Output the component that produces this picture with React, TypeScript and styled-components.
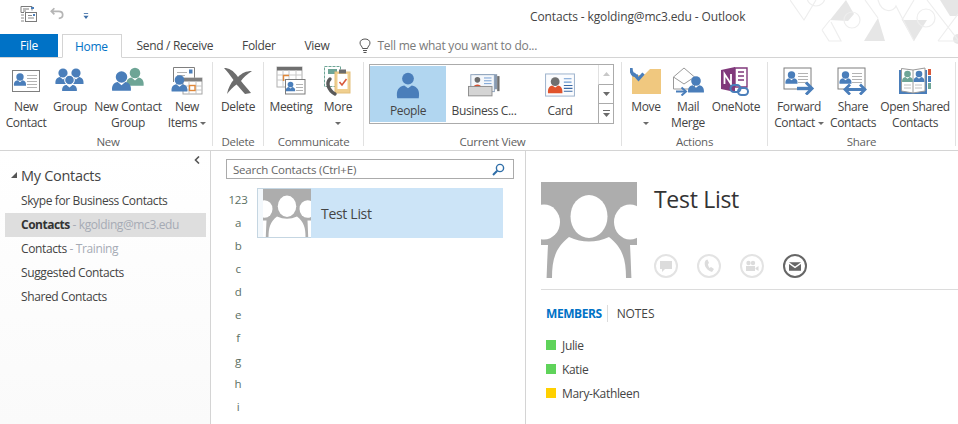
import React from "react";
import styled, { createGlobalStyle } from "styled-components";

const BLUE = "#4a7eba";
const GREEN = "#6ea596";
const GREY = "#7f7f7f";

const GlobalStyle = createGlobalStyle`
  html, body {
    margin: 0;
    padding: 0;
    background: #fff;
    overflow: hidden;
  }
  body {
    font-family: "Open Sans", "Noto Sans", sans-serif;
    color: #444;
  }
  * {
    box-sizing: border-box;
  }
`;

function Person({ x, y, s = 1, color = BLUE }: { x: number; y: number; s?: number; color?: string }) {
  return (
    <g transform={`translate(${x} ${y}) scale(${s})`} fill={color}>
      <circle cx="0" cy="0" r="4.6" />
      <path d="M-7.5 11 C-8 6.5 -6 4.5 -3 4 L0 6.5 L3 4 C6 4.5 8 6.5 7.5 11 Z" />
    </g>
  );
}

function CardLines({ x, y, w, n = 4 }: { x: number; y: number; w: number; n?: number }) {
  return (
    <g stroke="#b3b3b3" strokeWidth="1">
      {Array.from({ length: n }, (_, i) => (
        <line key={i} x1={x} x2={x + w} y1={y + i * 3 + 0.5} y2={y + i * 3 + 0.5} />
      ))}
    </g>
  );
}

const NewContactIcon = () => (
  <svg width="30" height="24" viewBox="0 0 30 24">
    <rect x="1.5" y="1.5" width="27" height="21" fill="#fff" stroke={GREY} />
    <Person x={9} y={8} s={0.8} />
    <CardLines x={16} y={6} w={10} n={5} />
  </svg>
);

const GroupIcon = () => (
  <svg width="30" height="28" viewBox="0 0 30 28">
    <Person x={8} y={6} />
    <Person x={21} y={6} />
    <g stroke="#fff" strokeWidth="1">
      <Person x={14.5} y={13} s={1.05} />
    </g>
  </svg>
);

const NewContactGroupIcon = () => (
  <svg width="34" height="28" viewBox="0 0 34 28">
    <Person x={24} y={6} s={1.15} color={GREEN} />
    <Person x={10.5} y={10} s={1.25} />
  </svg>
);

const NewItemsIcon = () => (
  <svg width="32" height="30" viewBox="0 0 32 30">
    <path d="M2.5 16 V1.5 H23.5 V12" fill="#fff" stroke={GREY} />
    <rect x="18" y="3.5" width="3.5" height="4" fill={BLUE} />
    <g stroke="#b3b3b3">
      <line x1="6" x2="16" y1="6.5" y2="6.5" />
      <line x1="6" x2="14" y1="9.5" y2="9.5" />
    </g>
    <rect x="12" y="12" width="19" height="16" fill="#fff" stroke="#a6a6a6" />
    <rect x="12" y="12" width="19" height="3.5" fill="#808080" />
    <path d="M12 20h19M12 24h19M18 15v13M25 15v13" stroke="#c4c4c4" fill="none" />
    <rect x="18.5" y="19.5" width="5.5" height="5" fill="#fff" stroke="#e0883a" strokeWidth="1.4" />
    <Person x={8.5} y={14} s={1.05} />
  </svg>
);

const DeleteIcon = () => (
  <svg width="30" height="28" viewBox="0 0 30 28">
    <path
      d="M1 1 C6 1 10 3 15 10 C19 6 23 4 29 4 C24 7 20 11 18 14 C21 18 25 22 28 26 L22 27 C19 24 16 20 13.5 17.5 C10 20 7 23 4 27 C5 21 8 16 10.5 13 C7 8 4 4 1 1 Z"
      fill="#6d6d6d"
    />
  </svg>
);

const MeetingIcon = () => (
  <svg width="30" height="30" viewBox="0 0 30 30">
    <rect x="1" y="1" width="25" height="20" fill="#fff" stroke="#b0b0b0" />
    <rect x="1" y="1" width="25" height="3.5" fill="#6f6f6f" />
    <path d="M1 9h25M1 14h25M7 4v17M13 4v17M20 4v17" stroke="#c9c9c9" fill="none" />
    <path d="M7.5 15 V9.5 H13" fill="none" stroke="#e0883a" strokeWidth="1.4" />
    <rect x="9.5" y="13.5" width="19.5" height="14.5" fill="#fff" stroke="#7c7c7c" />
    <Person x={14.5} y={18.5} s={0.62} />
    <CardLines x={20} y={18} w={7} n={3} />
  </svg>
);

const MoreIcon = () => (
  <svg width="30" height="32" viewBox="0 0 30 32">
    <rect x="1.5" y="1.5" width="16" height="20" fill="none" stroke={GREEN} strokeDasharray="3 1" />
    <rect x="5" y="4" width="9" height="5" fill={GREEN} />
    <rect x="12" y="7" width="15" height="21" fill="#f0cf8f" stroke="#e3bf7d" />
    <rect x="14.5" y="9" width="10" height="15" fill="#fff" />
    <path d="M16 4.5h7v4h-7z" fill="#6b6b6b" />
    <path d="M16.5 17 l2.5 3 l4.5 -6" fill="none" stroke="#d8583a" strokeWidth="1.6" />
    <path d="M7 14 C3 18 5 25 12 29" fill="none" stroke="#595959" strokeWidth="3.4" strokeLinecap="round" />
  </svg>
);

const BigPersonIcon = () => (
  <svg width="26" height="28" viewBox="0 0 26 30">
    <circle cx="13" cy="7" r="6.3" fill={BLUE} />
    <path d="M1.5 28 C0 20 3 15.5 9 14.5 L13 17.5 L17 14.5 C23 15.5 26 20 24.5 28 Z" fill={BLUE} />
  </svg>
);

const BusinessCardsIcon = () => (
  <svg width="32" height="25" viewBox="0 0 34 26">
    <rect x="7" y="1" width="24" height="16" fill="#8a9bb0" />
    <rect x="31" y="3" width="2.5" height="16" fill="#6f6f6f" />
    <rect x="3" y="1.5" width="25" height="18" fill="#f4f7fb" stroke="#8aa0bb" />
    <circle cx="10" cy="7" r="3" fill="#6c6c6c" />
    <path d="M6 15 C6 11 14 11 14 15 Z" fill="#d8502f" />
    <path d="M17 5h8M17 8h8M17 11h8" stroke="#6f9bd1" />
    <rect x="0.5" y="14" width="25" height="10" fill="#d4d4d4" stroke="#8c8c8c" />
  </svg>
);

const CardIcon = () => (
  <svg width="32" height="25" viewBox="0 0 32 26">
    <rect x="1" y="1" width="30" height="23" fill="#fbfcfe" stroke="#9ab0cb" />
    <circle cx="11" cy="9" r="4.6" fill="#6f6f6f" />
    <path d="M3.5 21 C3 15 6 13.5 8 13 L11 15 L14 13 C16 13.5 19 15 18.5 21 Z" fill="#e0532c" />
    <path d="M20 6h8M20 9.5h8" stroke="#6f9bd1" strokeWidth="1.2" />
    <path d="M20 13h9M20 16h9M20 19h9" stroke="#3c6aa5" strokeWidth="1.2" />
  </svg>
);

const MoveIcon = () => (
  <svg width="32" height="30" viewBox="0 0 32 30">
    <path d="M2 28 V9 H14 L20 3 H31 V28 Z" fill="#f0c87f" />
    <path d="M1 2 C1 7 3 10 8 10 M3.5 7.5 L8.5 13 L13.5 7.5" fill="none" stroke={BLUE} strokeWidth="3.2" />
  </svg>
);

const MailMergeIcon = () => (
  <svg width="32" height="30" viewBox="0 0 32 30">
    <path d="M1.5 11 L12 2 L22.5 11 V23 H1.5 Z" fill="#fff" stroke="#9a9a9a" />
    <path d="M1.5 11 L12 18 L22.5 11" fill="none" stroke="#9a9a9a" />
    <Person x={24} y={15} s={1.05} />
    <path d="M4 25.5h9" stroke={BLUE} strokeWidth="2" />
    <path d="M9.5 21.5 L14 25.5 L9.5 29.5" fill="none" stroke={BLUE} strokeWidth="2" />
  </svg>
);

const OneNoteIcon = () => (
  <svg width="32" height="30" viewBox="0 0 32 30">
    <path d="M15 2 H27 V21 H15 Z" fill="#fff" stroke="#80397b" strokeWidth="1.4" />
    <path d="M18 6h6M18 10h6M18 14h6" stroke="#80397b" strokeWidth="1.6" />
    <path d="M1 4 L15 1 V26 L1 23 Z" fill="#80397b" />
    <path d="M4.5 18 V8 L11 18 V8" fill="none" stroke="#fff" strokeWidth="1.8" />
    <rect x="10.5" y="19" width="10" height="7" rx="3.5" fill="none" stroke={BLUE} strokeWidth="2" />
    <rect x="18" y="22" width="10" height="7" rx="3.5" fill="none" stroke={BLUE} strokeWidth="2" />
  </svg>
);

const ForwardContactIcon = () => (
  <svg width="32" height="28" viewBox="0 0 32 28">
    <rect x="1" y="1" width="27" height="21" fill="#fff" stroke={GREY} />
    <Person x={8.5} y={8} s={0.8} />
    <CardLines x={15} y={6} w={10} n={4} />
    <path d="M14 21.5h13" stroke={BLUE} strokeWidth="3.4" />
    <path d="M23 15.5 L29 21.5 L23 27.5" fill="none" stroke={BLUE} strokeWidth="3" />
  </svg>
);

const ShareContactsIcon = () => (
  <svg width="32" height="28" viewBox="0 0 32 28">
    <rect x="1" y="1" width="27" height="21" fill="#fff" stroke={GREY} />
    <Person x={8.5} y={8} s={0.8} />
    <CardLines x={15} y={6} w={10} n={4} />
    <path d="M10 22.5h16" stroke={BLUE} strokeWidth="3" />
    <path d="M13 17.5 L8 22.5 L13 27.5 M23 17.5 L28 22.5 L23 27.5" fill="none" stroke={BLUE} strokeWidth="2.8" />
  </svg>
);

const OpenSharedIcon = () => (
  <svg width="32" height="28" viewBox="0 0 32 28">
    <rect x="0" y="3" width="28" height="24" fill={BLUE} />
    <rect x="29" y="2" width="3" height="6" fill="#d8583a" />
    <rect x="29" y="9" width="3" height="6" fill={BLUE} />
    <rect x="29" y="16" width="3" height="6" fill={GREEN} />
    <path d="M2.5 1.5 L14 3 L26 1 V24 L14 26 L2.5 24 Z" fill="#fff" stroke="#9a9a9a" />
    <line x1="14" x2="14" y1="3" y2="26" stroke="#9a9a9a" />
    <Person x={8.5} y={7} s={0.72} color={GREEN} />
    <Person x={20} y={7} s={0.72} />
    <path d="M5 18h7M5 21h7M16 18h7M16 21h7" stroke="#c0c0c0" />
  </svg>
);

const BackgroundArt = () => (
  <svg width="168" height="44" viewBox="0 0 168 44">
    <g fill="#e6e6e6">
      <path d="M40 20 L56 0 L64 14 L58 21 Z" />
      <path d="M74 41 L88 18 L95 41 Z" />
      <path d="M112 20 L137 20 L124 41 Z" />
      <path d="M150 0 L168 0 L168 16 L160 16 Z" />
      <circle cx="168" cy="39" r="5" />
    </g>
    <g fill="none" stroke="#eeeeee" strokeWidth="1.2">
      <path d="M0 0 L14 20 L26 0" />
      <circle cx="26" cy="-3" r="9" />
      <circle cx="62" cy="20" r="8" />
      <path d="M32 30 L40 20 M32 30 L39 41 H51 L41 22" />
      <path d="M75 0 L88 18 M88 0 C92 14 104 12 106 6 L124 41 M112 20 L124 0" />
      <circle cx="136" cy="18" r="9" />
      <path d="M137 0 L168 40 M148 41 L168 14 M148 41 H168" />
    </g>
  </svg>
);

const GroupPhoto = ({ size }: { size: number }) => (
  <PhotoSvg width={size} height={size} viewBox="0 0 96 96">
    <rect width="96" height="96" fill="#adadad" />
    <g fill="#fff">
      <ellipse cx="48" cy="34.5" rx="18.5" ry="21.5" />
      <ellipse cx="3" cy="40" rx="16" ry="17.5" />
      <ellipse cx="89" cy="40" rx="16" ry="17.5" />
      <path d="M0 63 H7 C6.5 72 6 85 5.6 96 H0 Z" />
      <path d="M96 63 H89 C89.5 72 90 85 90.4 96 H96 Z" />
      <path d="M11 96 C11 78 14 66 28 55 Q48 64 68 55 C82 66 85 78 85 96 Z" />
    </g>
  </PhotoSvg>
);

type RibbonButtonDef = {
  lines: string[];
  w: number;
  icon: React.ReactNode;
  caret?: boolean;
  below?: boolean;
};

type RibbonGroupDef = {
  label: string;
  width: number;
  pad: number;
  buttons: RibbonButtonDef[];
};

const ribbonGroups: RibbonGroupDef[] = [
  {
    label: "New",
    width: 213,
    pad: 4,
    buttons: [
      { lines: ["New", "Contact"], w: 44, icon: <NewContactIcon /> },
      { lines: ["Group"], w: 44, icon: <GroupIcon /> },
      { lines: ["New Contact", "Group"], w: 72, icon: <NewContactGroupIcon /> },
      { lines: ["New", "Items"], w: 46, icon: <NewItemsIcon />, caret: true },
    ],
  },
  {
    label: "Delete",
    width: 51,
    pad: 0,
    buttons: [{ lines: ["Delete"], w: 50, icon: <DeleteIcon /> }],
  },
  {
    label: "Communicate",
    width: 100,
    pad: 0,
    buttons: [
      { lines: ["Meeting"], w: 54, icon: <MeetingIcon /> },
      { lines: ["More"], w: 40, icon: <MoreIcon />, below: true },
    ],
  },
];

const ribbonGroupsRight: RibbonGroupDef[] = [
  {
    label: "Actions",
    width: 146,
    pad: 0,
    buttons: [
      { lines: ["Move"], w: 48, icon: <MoveIcon />, below: true },
      { lines: ["Mail", "Merge"], w: 36, icon: <MailMergeIcon /> },
      { lines: ["OneNote"], w: 60, icon: <OneNoteIcon /> },
    ],
  },
  {
    label: "Share",
    width: 188,
    pad: 0,
    buttons: [
      { lines: ["Forward", "Contact"], w: 62, icon: <ForwardContactIcon />, caret: true },
      { lines: ["Share", "Contacts"], w: 46, icon: <ShareContactsIcon /> },
      { lines: ["Open Shared", "Contacts"], w: 78, icon: <OpenSharedIcon /> },
    ],
  },
];

function RibbonButton({ def }: { def: RibbonButtonDef }) {
  return (
    <BigButton $width={def.w}>
      <IconSlot>{def.icon}</IconSlot>
      {def.lines.map((line, i) => (
        <ButtonLine key={line}>
          {line}
          {def.caret && i === def.lines.length - 1 && <InlineCaret />}
        </ButtonLine>
      ))}
      {def.below && (
        <ButtonLine>
          <InlineCaret $flush />
        </ButtonLine>
      )}
    </BigButton>
  );
}

function ButtonGroup({ group }: { group: RibbonGroupDef }) {
  return (
    <RibbonGroup $width={group.width} $pad={group.pad}>
      <GroupButtons>
        {group.buttons.map((b) => (
          <RibbonButton key={b.lines.join(" ")} def={b} />
        ))}
      </GroupButtons>
      <GroupLabel>{group.label}</GroupLabel>
    </RibbonGroup>
  );
}

const letters = ["123", "a", "b", "c", "d", "e", "f", "g", "h", "i"];
const members = [
  { name: "Julie", color: "#5fd35a" },
  { name: "Katie", color: "#5fd35a" },
  { name: "Mary-Kathleen", color: "#ffd000" },
];

export default function App() {
  return (
    <Window>
      <GlobalStyle />
      <ArtCorner>
        <BackgroundArt />
      </ArtCorner>
      <TitleBar>
        <QuickAccess>
          <svg width="18" height="18" viewBox="0 0 18 18">
            <path d="M1 1.5h11v4M1 1.5v6h3M3 4h6M3 6h3" fill="none" stroke="#7a7a7a" />
            <rect x="11" y="2" width="3" height="2" fill={BLUE} />
            <rect x="5.5" y="7.5" width="11" height="9" fill="#fff" stroke="#7a7a7a" />
            <path d="M8 10.5h4M8 13h6" stroke="#8a8a8a" />
            <rect x="13" y="9" width="2" height="2" fill={BLUE} />
            <path d="M1 10h3M1 13h3M1 16h3" stroke="#8a8a8a" />
          </svg>
          <svg width="14" height="13" viewBox="0 0 16 14">
            <path
              d="M5 1 L1.5 4.5 L5 8 M2 4.5 H10 C13 4.5 14.5 6.5 14.5 8.5 C14.5 11 12.5 12.5 10 12.5"
              fill="none"
              stroke="#b5b5b5"
              strokeWidth="2"
            />
          </svg>
          <svg width="6" height="7" viewBox="0 0 7 8">
            <path d="M1 0.5h5" stroke="#3f6fa8" />
            <path d="M0.5 3h6L3.5 7z" fill="#3f6fa8" />
          </svg>
        </QuickAccess>
        <WindowTitle>Contacts - kgolding@mc3.edu - Outlook</WindowTitle>
      </TitleBar>

      <TabRow>
        <FileTab>File</FileTab>
        <ActiveTab>Home</ActiveTab>
        <Tab>Send / Receive</Tab>
        <Tab>Folder</Tab>
        <Tab>View</Tab>
        <TellMe>
          <svg width="12" height="16" viewBox="0 0 12 16">
            <path
              d="M3.5 10.5 C3.5 8.5 1 7.5 1 5 C1 2.5 3.2 1 6 1 C8.8 1 11 2.5 11 5 C11 7.5 8.5 8.5 8.5 10.5 Z"
              fill="none"
              stroke="#555"
            />
            <path d="M4 12.5h4M4.5 14.5h3" stroke="#555" />
          </svg>
          <span>Tell me what you want to do...</span>
        </TellMe>
      </TabRow>

      <Ribbon>
        {ribbonGroups.map((group) => (
          <ButtonGroup key={group.label} group={group} />
        ))}

        <RibbonGroup $width={258} $pad={0}>
          <GalleryWrap>
            <Gallery>
              <GalleryItem $selected>
                <GalleryIcon $selected>
                  <BigPersonIcon />
                </GalleryIcon>
                <GalleryText>People</GalleryText>
              </GalleryItem>
              <GalleryItem>
                <GalleryIcon>
                  <BusinessCardsIcon />
                </GalleryIcon>
                <GalleryText>Business C...</GalleryText>
              </GalleryItem>
              <GalleryItem>
                <GalleryIcon>
                  <CardIcon />
                </GalleryIcon>
                <GalleryText>Card</GalleryText>
              </GalleryItem>
              <GalleryScroll>
                <ScrollCell>
                  <svg width="7" height="4" viewBox="0 0 7 4">
                    <path d="M0 4h7L3.5 0z" fill="#c8c8c8" />
                  </svg>
                </ScrollCell>
                <ScrollCell>
                  <svg width="7" height="4" viewBox="0 0 7 4">
                    <path d="M0 0h7L3.5 4z" fill="#6b6b6b" />
                  </svg>
                </ScrollCell>
                <ScrollCell>
                  <svg width="7" height="7" viewBox="0 0 7 7">
                    <path d="M0 0.5h7" stroke="#6b6b6b" />
                    <path d="M0 3h7L3.5 7z" fill="#6b6b6b" />
                  </svg>
                </ScrollCell>
              </GalleryScroll>
            </Gallery>
          </GalleryWrap>
          <GroupLabel>Current View</GroupLabel>
        </RibbonGroup>

        {ribbonGroupsRight.map((group) => (
          <ButtonGroup key={group.label} group={group} />
        ))}
      </Ribbon>

      <Body>
        <Sidebar>
          <CollapseRow>
            <svg width="6" height="8" viewBox="0 0 6 8">
              <path d="M5 0.5 L1.5 4 L5 7.5" fill="none" stroke="#555" strokeWidth="1.6" />
            </svg>
          </CollapseRow>
          <SectionHead>
            <svg width="6" height="6" viewBox="0 0 6 6">
              <path d="M6 0v6H0z" fill="#555" />
            </svg>
            My Contacts
          </SectionHead>
          <NavItem>Skype for Business Contacts</NavItem>
          <NavItem $selected>
            <strong>Contacts</strong>
            <NavSuffix> - kgolding@mc3.edu</NavSuffix>
          </NavItem>
          <NavItem>
            Contacts<NavSuffix> - Training</NavSuffix>
          </NavItem>
          <NavItem>Suggested Contacts</NavItem>
          <NavItem>Shared Contacts</NavItem>
        </Sidebar>

        <ListPane>
          <SearchBox>
            <span>Search Contacts (Ctrl+E)</span>
            <svg width="13" height="13" viewBox="0 0 13 13">
              <circle cx="8" cy="5" r="3.6" fill="none" stroke="#2f6ea8" strokeWidth="1.4" />
              <path d="M5.2 7.8 L1 12" stroke="#2f6ea8" strokeWidth="2" />
            </svg>
          </SearchBox>
          <ListColumns>
            <Alphabet>
              {letters.map((l) => (
                <Letter key={l}>{l}</Letter>
              ))}
            </Alphabet>
            <ContactCard>
              <CardThumb>
                <GroupPhoto size={48} />
              </CardThumb>
              <CardName>Test List</CardName>
            </ContactCard>
          </ListColumns>
        </ListPane>

        <DetailPane>
          <DetailHead>
            <GroupPhoto size={96} />
            <DetailInfo>
              <DetailName>Test List</DetailName>
              <ActionRow>
                <ActionCircle>
                  <svg width="12" height="12" viewBox="0 0 12 12">
                    <path d="M0 1h12v8H5l-3 3V9H0z" fill="#dcdcdc" />
                  </svg>
                </ActionCircle>
                <ActionCircle>
                  <svg width="12" height="14" viewBox="0 0 12 14">
                    <path d="M3 1 C0 4 2 11 9 13 L11 10 L8 8 L6.5 9 C5.5 8 5 6 5 5 L6 4 L4.5 0.5 Z" fill="#dcdcdc" />
                  </svg>
                </ActionCircle>
                <ActionCircle>
                  <svg width="14" height="12" viewBox="0 0 14 12">
                    <circle cx="3.5" cy="3" r="2.2" fill="#dcdcdc" />
                    <circle cx="8" cy="3" r="2.2" fill="#dcdcdc" />
                    <path d="M1 6h9v5H1zM10.5 8l3-2v5l-3-2z" fill="#dcdcdc" />
                  </svg>
                </ActionCircle>
                <ActionCircle $active>
                  <svg width="12" height="9" viewBox="0 0 14 10">
                    <path d="M0 0h14L7 5z" fill="#666" />
                    <path d="M0 2v8h14V2L7 7z" fill="#666" />
                  </svg>
                </ActionCircle>
              </ActionRow>
            </DetailInfo>
          </DetailHead>
          <Rule />
          <DetailTabs>
            <MembersTab>MEMBERS</MembersTab>
            <NotesTab>NOTES</NotesTab>
          </DetailTabs>
          <MemberList>
            {members.map((m) => (
              <Member key={m.name}>
                <Presence $color={m.color} />
                {m.name}
              </Member>
            ))}
          </MemberList>
        </DetailPane>
      </Body>
    </Window>
  );
}

const PhotoSvg = styled.svg`
  display: block;
`;

const Window = styled.div`
  position: relative;
  width: 958px;
  height: 424px;
  overflow: hidden;
  background: #fff;
  font-size: 12px;
`;

const ArtCorner = styled.div`
  position: absolute;
  top: 0;
  right: 0;
  line-height: 0;
`;

const TitleBar = styled.div`
  position: relative;
  height: 34px;
  display: flex;
  align-items: center;
`;

const QuickAccess = styled.div`
  width: 530px;
  padding: 0 0 7px 20px;
  display: flex;
  align-items: center;
  gap: 12px;
  flex-shrink: 0;
  svg:last-child {
    margin: 5px 0 0 7px;
  }
`;

const WindowTitle = styled.div`
  font-size: 12px;
  letter-spacing: -0.13px;
  color: #444;
  margin-top: -2px;
`;

const TabRow = styled.div`
  height: 24px;
  display: flex;
  align-items: stretch;
  border-bottom: 1px solid #d4d4d4;
`;

const FileTab = styled.div`
  width: 58px;
  margin-right: 4px;
  background: #0072c6;
  color: #fff;
  display: flex;
  align-items: center;
  justify-content: center;
  letter-spacing: -0.2px;
`;

const Tab = styled.div`
  padding: 0 14px 0 15px;
  height: 23px;
  display: flex;
  align-items: center;
  letter-spacing: -0.33px;
  color: #444;
`;

const ActiveTab = styled.div`
  padding: 0 13px 0 12px;
  height: 24px;
  display: flex;
  align-items: center;
  letter-spacing: -0.33px;
  background: #fff;
  color: #0072c6;
  border: 1px solid #d4d4d4;
  border-bottom: 1px solid #fff;
`;

const TellMe = styled.div`
  margin-left: 16px;
  display: flex;
  align-items: center;
  gap: 6px;
  color: #7a7a7a;
  letter-spacing: -0.25px;
`;

const Ribbon = styled.div`
  height: 93px;
  display: flex;
  border-bottom: 1px solid #d4d4d4;
`;

const RibbonGroup = styled.div<{ $width: number; $pad: number }>`
  width: ${(p) => p.$width}px;
  flex-shrink: 0;
  margin: 4px 0 4px;
  padding-left: ${(p) => p.$pad}px;
  display: flex;
  flex-direction: column;
  border-right: 1px solid #e1e1e1;
`;

const GroupButtons = styled.div`
  flex: 1;
  display: flex;
  align-items: flex-start;
`;

const BigButton = styled.div<{ $width: number }>`
  width: ${(p) => p.$width}px;
  flex-shrink: 0;
  display: flex;
  flex-direction: column;
  align-items: center;
`;

const IconSlot = styled.div`
  height: 37px;
  display: flex;
  align-items: center;
  justify-content: center;
  line-height: 0;
`;

const ButtonLine = styled.div`
  height: 16px;
  line-height: 16px;
  white-space: nowrap;
  letter-spacing: -0.35px;
  color: #444;
  display: flex;
  align-items: center;
  justify-content: center;
`;

const InlineCaret = styled.span<{ $flush?: boolean }>`
  display: inline-block;
  margin-left: ${(p) => (p.$flush ? 0 : 3)}px;
  width: 0;
  height: 0;
  border-left: 3px solid transparent;
  border-right: 3px solid transparent;
  border-top: 3px solid #6b6b6b;
`;

const GroupLabel = styled.div`
  height: 13px;
  line-height: 17px;
  text-align: center;
  font-size: 11.5px;
  letter-spacing: -0.3px;
  color: #5f5f5f;
`;

const GalleryWrap = styled.div`
  flex: 1;
  padding: 2px 0 0 5px;
`;

const Gallery = styled.div`
  width: 245px;
  height: 60px;
  display: flex;
  padding: 1px 0;
  border: 1px solid #ababab;
  background: #fff;
`;

const GalleryItem = styled.div<{ $selected?: boolean }>`
  width: 76px;
  flex-shrink: 0;
  display: flex;
  flex-direction: column;
  align-items: center;
  padding-top: 6px;
  background: ${(p) => (p.$selected ? "#b1d6f0" : "transparent")};
`;

const GalleryIcon = styled.div<{ $selected?: boolean }>`
  height: 31px;
  padding-top: ${(p) => (p.$selected ? 0 : 1)}px;
  line-height: 0;
`;

const GalleryText = styled.div`
  line-height: 16px;
  letter-spacing: -0.35px;
  white-space: nowrap;
  color: #444;
`;

const GalleryScroll = styled.div`
  margin-left: auto;
  margin-top: -1px;
  margin-bottom: -1px;
  width: 15px;
  display: flex;
  flex-direction: column;
`;

const ScrollCell = styled.div`
  flex: 1;
  display: flex;
  align-items: center;
  justify-content: center;
  line-height: 0;
  border-bottom: 1px solid #ababab;
  border-left: 1px solid #ababab;
  &:first-child {
    border-left-color: #e1e1e1;
  }
  &:last-child {
    border-bottom: none;
  }
`;

const Body = styled.div`
  height: 273px;
  display: flex;
`;

const Sidebar = styled.nav`
  width: 211px;
  flex-shrink: 0;
  padding: 0 4px 0 5px;
  border-right: 1px solid #d4d4d4;
  background: linear-gradient(#ffffff, #fafafa);
`;

const CollapseRow = styled.div`
  height: 14px;
  padding: 5px 6px 0 0;
  display: flex;
  justify-content: flex-end;
  line-height: 0;
`;

const SectionHead = styled.div`
  height: 24px;
  display: flex;
  align-items: center;
  gap: 4px;
  padding: 0 0 4px 6px;
  font-size: 14.5px;
  letter-spacing: -0.3px;
  color: #444;
`;

const NavItem = styled.div<{ $selected?: boolean }>`
  height: 24px;
  line-height: 23px;
  padding-left: 16px;
  white-space: nowrap;
  letter-spacing: -0.38px;
  color: #444;
  background: ${(p) => (p.$selected ? "#dedede" : "transparent")};
  strong {
    font-weight: 700;
    color: #333;
    letter-spacing: -0.5px;
  }
`;

const NavSuffix = styled.span`
  color: #a6abb5;
`;

const ListPane = styled.section`
  width: 315px;
  flex-shrink: 0;
  padding: 8px 0 0 15px;
  border-right: 1px solid #d4d4d4;
`;

const SearchBox = styled.div`
  width: 288px;
  height: 20px;
  padding: 0 8px 0 6px;
  display: flex;
  align-items: center;
  justify-content: space-between;
  border: 1px solid #ababab;
  font-size: 11.5px;
  letter-spacing: -0.2px;
  color: #666;
`;

const ListColumns = styled.div`
  margin-top: 9px;
  display: flex;
  align-items: flex-start;
`;

const Alphabet = styled.div`
  width: 31px;
  flex-shrink: 0;
`;

const Letter = styled.div`
  height: 23px;
  line-height: 23px;
  text-align: center;
  font-size: 11.5px;
  letter-spacing: -0.3px;
  color: #5c6f63;
  margin-left: -7px;
  width: 38px;
`;

const ContactCard = styled.div`
  width: 246px;
  height: 50px;
  display: flex;
  align-items: center;
  background: #cce4f7;
`;

const CardThumb = styled.div`
  width: 54px;
  height: 50px;
  padding: 0 0 0 5px;
  background: #f3f8fc;
  border: 1px solid #c5d6e2;
  border-right: none;
  flex-shrink: 0;
`;

const CardName = styled.div`
  margin-left: 10px;
  font-size: 14px;
  letter-spacing: -0.3px;
  color: #444;
`;

const DetailPane = styled.section`
  flex: 1;
  padding: 31px 0 0 15px;
`;

const DetailHead = styled.div`
  display: flex;
  align-items: stretch;
  height: 96px;
`;

const DetailInfo = styled.div`
  margin-left: 17px;
  display: flex;
  flex-direction: column;
  justify-content: space-between;
`;

const DetailName = styled.div`
  font-size: 23px;
  line-height: 34px;
  letter-spacing: -0.3px;
  color: #333;
`;

const ActionRow = styled.div`
  display: flex;
  gap: 19px;
`;

const ActionCircle = styled.div<{ $active?: boolean }>`
  width: 24px;
  height: 24px;
  border-radius: 50%;
  display: flex;
  align-items: center;
  justify-content: center;
  border: 2px solid ${(p) => (p.$active ? "#666" : "#e3e3e3")};
`;

const Rule = styled.div`
  height: 1px;
  margin-top: 11px;
  background: #dcdcdc;
`;

const DetailTabs = styled.div`
  margin-top: 15px;
  padding-left: 5px;
  display: flex;
  height: 16px;
  align-items: center;
`;

const MembersTab = styled.div`
  font-weight: 700;
  color: #0072c6;
  letter-spacing: -0.43px;
  padding-right: 5px;
  margin-right: 9px;
  border-right: 1px solid #dcdcdc;
`;

const NotesTab = styled.div`
  color: #444;
  letter-spacing: -0.1px;
`;

const MemberList = styled.div`
  margin-top: 12px;
  padding-left: 5px;
`;

const Member = styled.div`
  height: 24px;
  display: flex;
  align-items: center;
  gap: 6px;
  letter-spacing: -0.33px;
  color: #444;
`;

const Presence = styled.span<{ $color: string }>`
  width: 10px;
  height: 10px;
  background: ${(p) => p.$color};
`;
